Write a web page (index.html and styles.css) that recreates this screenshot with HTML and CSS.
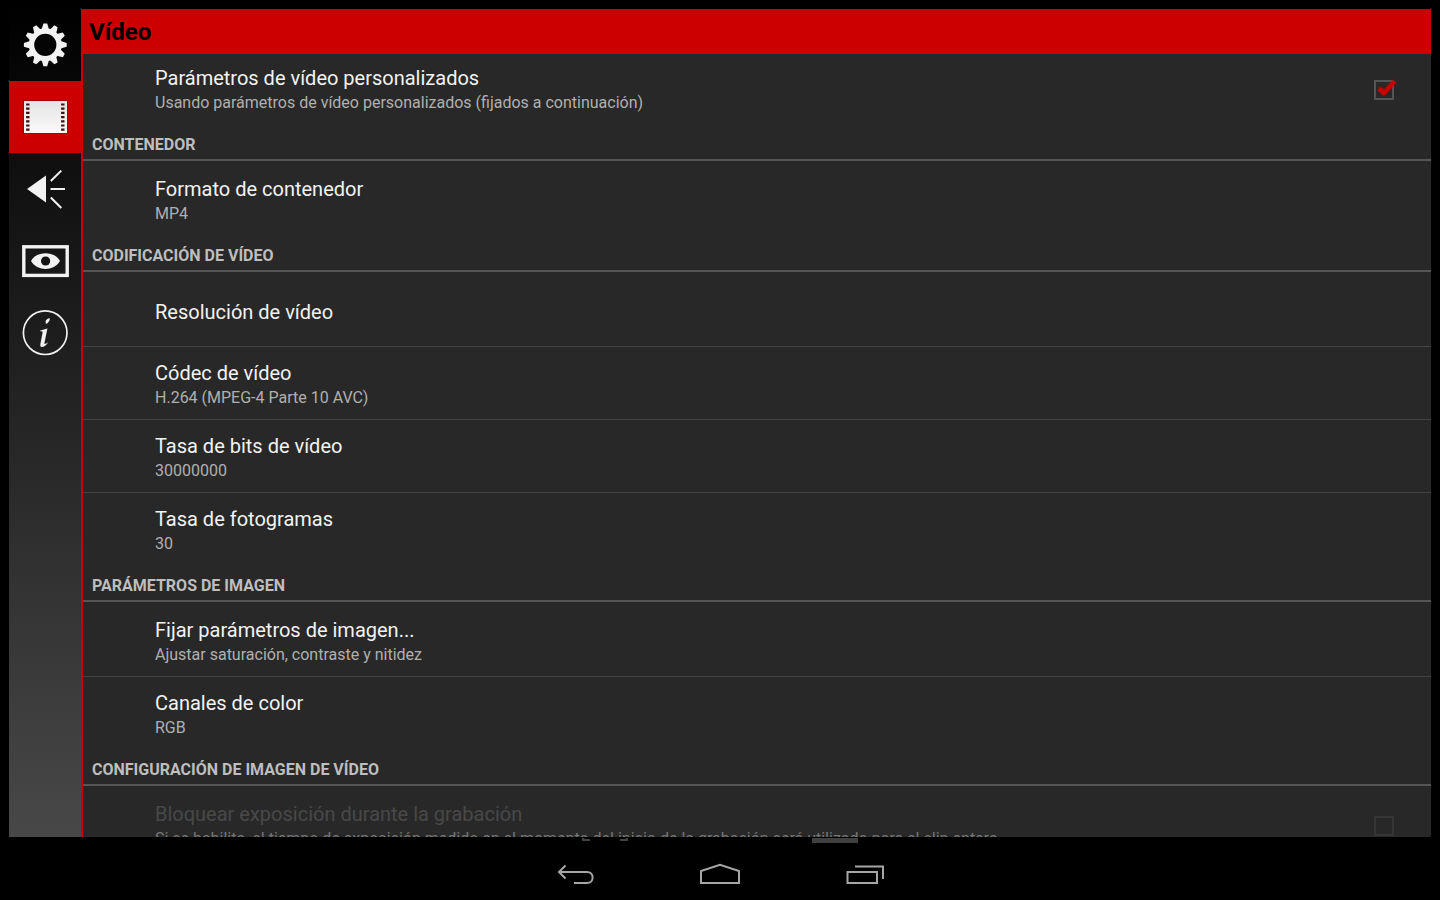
FILE: index.html
```html
<!DOCTYPE html>
<html lang="es">
<head>
<meta charset="UTF-8">
<meta name="viewport" content="width=device-width, initial-scale=1.0">
<title>Vídeo</title>
<link rel="stylesheet" href="styles.css">
</head>
<body>

<div class="app">
    <!-- Pestañas laterales -->
    <nav class="tabs">
        <button class="tab" aria-label="General">
            <svg width="72" height="72" viewBox="0 0 72 72">
                <defs>
                    <path id="tooth" d="M32.6 20.5 L34.4 14.4 H38.2 L40 20.5 Z"/>
                </defs>
                <g fill="#f2f2f2">
                    <use href="#tooth"/>
                    <use href="#tooth" transform="rotate(30 36.3 35.8)"/>
                    <use href="#tooth" transform="rotate(60 36.3 35.8)"/>
                    <use href="#tooth" transform="rotate(90 36.3 35.8)"/>
                    <use href="#tooth" transform="rotate(120 36.3 35.8)"/>
                    <use href="#tooth" transform="rotate(150 36.3 35.8)"/>
                    <use href="#tooth" transform="rotate(180 36.3 35.8)"/>
                    <use href="#tooth" transform="rotate(210 36.3 35.8)"/>
                    <use href="#tooth" transform="rotate(240 36.3 35.8)"/>
                    <use href="#tooth" transform="rotate(270 36.3 35.8)"/>
                    <use href="#tooth" transform="rotate(300 36.3 35.8)"/>
                    <use href="#tooth" transform="rotate(330 36.3 35.8)"/>
                </g>
                <circle cx="36.3" cy="35.8" r="13.8" fill="none" stroke="#f2f2f2" stroke-width="5.4"/>
            </svg>
        </button>
        <button class="tab active" aria-label="Vídeo">
            <svg width="72" height="72" viewBox="0 0 72 72">
                <defs>
                    <linearGradient id="film" x1="0" y1="0" x2="0" y2="1">
                        <stop offset="0" stop-color="#e4e4e4"/>
                        <stop offset="1" stop-color="#fafafa"/>
                    </linearGradient>
                </defs>
                <rect x="14" y="19" width="45" height="34" fill="#900000" opacity="0.6"/>
                <rect x="15" y="20" width="43" height="32" fill="url(#film)"/>
                <path d="M18.8 22.4V51M53.8 22.4V51" stroke="#3c1010" stroke-width="3.4" stroke-dasharray="2.2 2" fill="none"/>
            </svg>
        </button>
        <button class="tab" aria-label="Audio">
            <svg width="72" height="72" viewBox="0 0 72 72">
                <path d="M18 36 L37 22.6 V49.4 Z" fill="#f2f2f2"/>
                <path d="M41.8 28 L52.3 17.6 M41.5 36 H56 M41.8 44.5 L52.3 55" stroke="#f2f2f2" stroke-width="2" fill="none"/>
            </svg>
        </button>
        <button class="tab" aria-label="Pantalla">
            <svg width="72" height="72" viewBox="0 0 72 72">
                <rect x="14.8" y="21.8" width="43.4" height="28.6" fill="none" stroke="#f2f2f2" stroke-width="3.4"/>
                <path d="M22 36 C28 25.5 45 25.5 51 36 C45 46.5 28 46.5 22 36 Z" fill="#f2f2f2"/>
                <circle cx="36.6" cy="36" r="4.6" fill="#141414"/>
            </svg>
        </button>
        <button class="tab" aria-label="Información">
            <svg width="72" height="72" viewBox="0 0 72 72">
                <circle cx="36.2" cy="35.7" r="21.8" fill="none" stroke="#f2f2f2" stroke-width="1.7"/>
                <path d="M36.6 24.2 C37 22.4 38.6 21.4 40.9 21.2 C41 23.8 39 26.2 36.9 27 Z" fill="#f2f2f2"/>
                <path d="M31.3 33.6 L38.4 31.4 L35.4 46.2 C35.4 47.4 36.6 47 39.3 45.2 C37.4 48.4 34.8 50 32.8 50 C31.4 50 31 48.8 31.4 46.8 L33.6 35.6 C33.6 34.2 32.6 34.2 31.3 34.6 Z" fill="#f2f2f2"/>
            </svg>
        </button>
    </nav>

    <main class="panel">
        <h1>Vídeo</h1>
        <div class="list">
            <section>
                <div class="row">
                    <label class="text" for="custom">
                        <span class="title">Parámetros de vídeo personalizados</span>
                        <span class="sub">Usando parámetros de vídeo personalizados (fijados a continuación)</span>
                    </label>
                    <span class="check">
                        <input type="checkbox" id="custom" checked>
                        <svg class="mark" width="24" height="24" viewBox="0 0 24 24"><path d="M5 11.5 L10 16 L20.5 4.5" fill="none" stroke="#cc0000" stroke-width="4"/></svg>
                    </span>
                </div>
            </section>

            <section>
                <h2>CONTENEDOR</h2>
                <button class="row">
                    <span class="text">
                        <span class="title">Formato de contenedor</span>
                        <span class="sub">MP4</span>
                    </span>
                </button>
            </section>

            <section>
                <h2>CODIFICACIÓN DE VÍDEO</h2>
                <button class="row">
                    <span class="text">
                        <span class="title">Resolución de vídeo</span>
                    </span>
                </button>
                <button class="row">
                    <span class="text">
                        <span class="title">Códec de vídeo</span>
                        <span class="sub">H.264 (MPEG-4 Parte 10 AVC)</span>
                    </span>
                </button>
                <button class="row">
                    <span class="text">
                        <span class="title">Tasa de bits de vídeo</span>
                        <span class="sub">30000000</span>
                    </span>
                </button>
                <button class="row">
                    <span class="text">
                        <span class="title">Tasa de fotogramas</span>
                        <span class="sub">30</span>
                    </span>
                </button>
            </section>

            <section>
                <h2>PARÁMETROS DE IMAGEN</h2>
                <button class="row">
                    <span class="text">
                        <span class="title">Fijar parámetros de imagen...</span>
                        <span class="sub">Ajustar saturación, contraste y nitidez</span>
                    </span>
                </button>
                <button class="row">
                    <span class="text">
                        <span class="title">Canales de color</span>
                        <span class="sub">RGB</span>
                    </span>
                </button>
            </section>

            <section>
                <h2>CONFIGURACIÓN DE IMAGEN DE VÍDEO</h2>
                <div class="row disabled">
                    <label class="text" for="lock">
                        <span class="title">Bloquear exposición durante la grabación</span>
                        <span class="sub">Si se habilita, el tiempo de exposición medido en el momento del inicio de la grabación será utilizado para el clip entero</span>
                    </label>
                    <span class="check">
                        <input type="checkbox" id="lock" disabled>
                    </span>
                </div>
            </section>
        </div>
    </main>
</div>

<!-- Barra de navegación del sistema -->
<footer class="navbar">
    <svg class="residue" width="280" height="8" viewBox="0 0 280 8">
        <path d="M3 1V3H10M47 1V3H40" fill="none" stroke="#444" stroke-width="2"/>
        <rect x="232" y="1" width="46" height="5" fill="#404040"/>
    </svg>
    <button aria-label="Atrás">
        <svg width="40" height="28" viewBox="0 0 40 28">
            <path d="M9.5 4.5 L3 11 L9.5 17.5 M3 11 H31 C38.5 11 38.5 22 31 22 H18" fill="none" stroke="#a6a6a6" stroke-width="2"/>
        </svg>
    </button>
    <button aria-label="Inicio">
        <svg width="40" height="28" viewBox="0 0 40 28">
            <path d="M1 22 V10 L20 3.8 L39 10 V22 Z" fill="none" stroke="#a6a6a6" stroke-width="2"/>
        </svg>
    </button>
    <button aria-label="Recientes">
        <svg width="40" height="28" viewBox="0 0 40 28">
            <path d="M3.5 11 H33 V22 H3.5 Z M11 5.5 H39 V18" fill="none" stroke="#a6a6a6" stroke-width="2"/>
        </svg>
    </button>
</footer>

</body>
</html>
```
FILE: styles.css
```css
* {
    box-sizing: border-box;
}

body {
    margin: 0;
    height: 100vh;
    display: flex;
    flex-direction: column;
    overflow: hidden;
    background: #000;
    color: #f3f3f3;
    font-family: Roboto, sans-serif;
}

button {
    padding: 0;
    border: 0;
    background: none;
    color: inherit;
    font: inherit;
    text-align: left;
    cursor: pointer;
}

svg {
    display: block;
}

.app {
    flex: 1;
    min-height: 0;
    display: flex;
    margin: 9px 9px 0;
}

/* Pestañas */
.tabs {
    width: 72px;
    flex-shrink: 0;
    background: linear-gradient(to bottom, #000, #0f0f0f 18%, #202020 43%, #484848);
}

.tab {
    display: block;
    width: 72px;
    height: 72px;
}

.tab.active {
    background: #cc0000;
}

/* Panel */
.panel {
    flex: 1;
    min-width: 0;
    display: flex;
    flex-direction: column;
    background: #282828;
    border-left: 2px solid #cc0000;
    border-radius: 0 0 2px 0;
}

h1 {
    margin: 0;
    padding: 2px 6px 0;
    position: relative;
    z-index: 1;
    background: #cc0000;
    color: #000;
    font-size: 24px;
    line-height: 43px;
    font-weight: bold;
}

.list {
    flex: 1;
    min-height: 0;
    overflow: hidden;
}

.list section:first-child {
    margin-top: -3px;
}

h2 {
    margin: 0 0 1px;
    padding: 7px 9px 0;
    border-bottom: 2px solid #555;
    color: #bebebe;
    font-size: 16px;
    line-height: 28px;
    font-weight: bold;
}

.row {
    display: flex;
    align-items: center;
    width: 100%;
    min-height: 73px;
    padding: 13px 37px 10px 72px;
    border-top: 1px solid transparent;
}

.row + .row {
    border-top-color: #444;
}

.text {
    flex: 1;
    min-width: 0;
}

.title,
.sub {
    display: block;
    white-space: nowrap;
}

.title {
    font-size: 20px;
    line-height: 26px;
}

.sub {
    color: #b0b0b0;
    font-size: 16px;
    line-height: 23px;
}

.disabled .title {
    color: #484848;
}

.disabled .sub {
    color: #757575;
}

.check {
    position: relative;
}

.check input {
    display: block;
    appearance: none;
    width: 20px;
    height: 20px;
    margin: 0;
    border: 2px solid #555;
    border-radius: 1px;
}

.check input:disabled {
    border-color: #363636;
}

.mark {
    position: absolute;
    top: -3px;
    left: 0;
    pointer-events: none;
    filter: drop-shadow(0 0 1px #cc0000);
}

.check input:not(:checked) + .mark {
    display: none;
}

/* Barra inferior */
.navbar {
    position: relative;
    display: flex;
    justify-content: center;
    align-items: flex-start;
    gap: 104px;
    height: 63px;
    padding-top: 24px;
}

.residue {
    position: absolute;
    top: 0;
    left: calc(50% - 140px);
}
```
